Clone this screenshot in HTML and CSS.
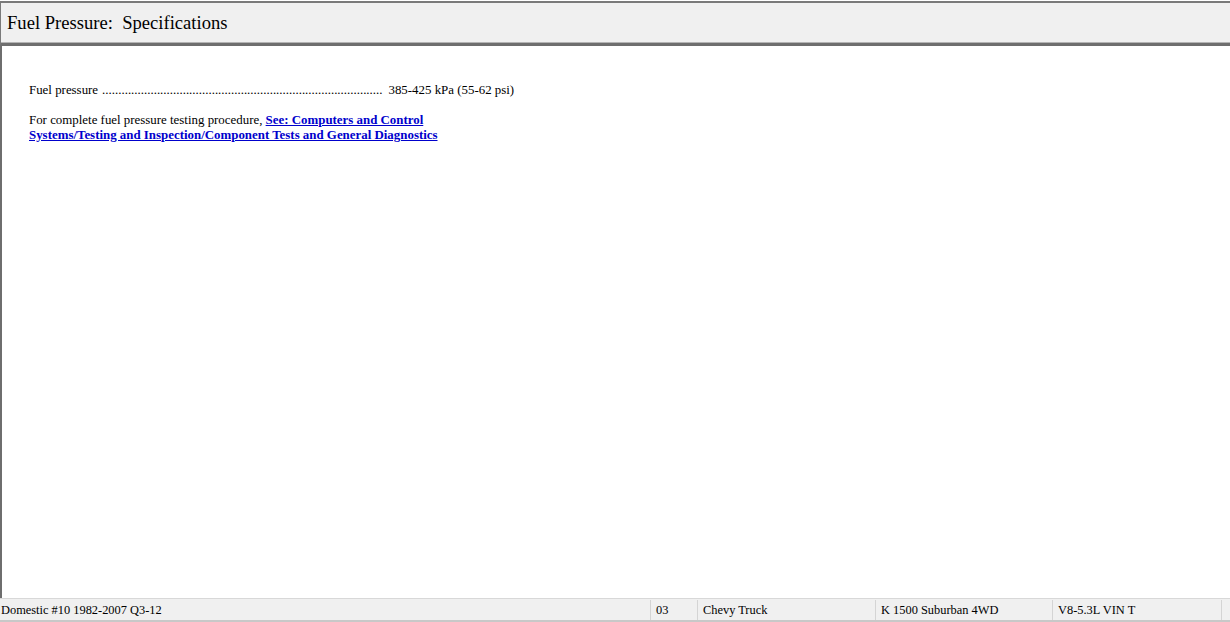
FILE: index.html
```html
<!DOCTYPE html>
<html lang="en">
<head>
  <meta charset="UTF-8" />
  <title>Fuel Pressure: Specifications</title>
  <link rel="stylesheet" href="styles.css">
</head>
<body>
  <div class="window">
    <div class="title-bar">Fuel Pressure:&nbsp; Specifications</div>

    <div class="content">
      <div class="spec-row">
        <span class="spec-name">Fuel pressure</span>
        <span class="leader">.......................................................................................</span>
        <span class="spec-value">385-425 kPa (55-62 psi)</span>
      </div>
      <p class="note">
        For complete fuel pressure testing procedure, <a href="#" class="ref-link">See: Computers and Control<br>Systems/Testing and Inspection/Component Tests and General Diagnostics</a>
      </p>
    </div>

    <div class="status-bar">
      <div class="cell cell-db">Domestic #10 1982-2007 Q3-12</div>
      <div class="cell cell-year">03</div>
      <div class="cell cell-make">Chevy Truck</div>
      <div class="cell cell-model">K 1500 Suburban 4WD</div>
      <div class="cell cell-engine">V8-5.3L VIN T</div>
      <div class="cell cell-end"></div>
    </div>
  </div>
</body>
</html>
```

FILE: styles.css
```css
* {
  box-sizing: border-box;
}

body {
  margin: 0;
  padding: 0;
  background: #ffffff;
  font-family: "Liberation Serif", "Times New Roman", serif;
  color: #000;
}

.window {
  width: 1230px;
  height: 622px;
  display: flex;
  flex-direction: column;
  padding-top: 1px;
}

.title-bar {
  height: 45px;
  background: #f0f0f0;
  border-top: 2px solid #7a7a7a;
  border-left: 1px solid #7a7a7a;
  border-bottom: 3px solid #6e6e6e;
  box-shadow: inset 0 -1px 0 #b4b4b4;
  padding-left: 6px;
  font-size: 18.6px;
  display: flex;
  align-items: center;
}

.content {
  flex: 1;
  border-left: 2px solid #6e6e6e;
  padding: 37px 27px;
  font-size: 12.9px;
}

.spec-row {
  display: flex;
  white-space: nowrap;
  line-height: 15px;
}

.leader {
  margin-left: 4px;
  margin-right: 6px;
}

.note {
  margin: 15px 0 0;
  line-height: 15px;
}

.ref-link {
  color: #0000cc;
  font-weight: bold;
  text-decoration: underline;
}

.status-bar {
  height: 24px;
  background: #f0f0f0;
  border-top: 1px solid #d8d8d8;
  border-bottom: 2px solid #c8c8c8;
  display: flex;
  font-size: 12.4px;
  padding-top: 1px;
}

.cell {
  padding-left: 1px;
  display: flex;
  align-items: center;
  white-space: nowrap;
  border-right: 1px solid #d4d4d4;
}

.cell-db { width: 651px; }
.cell-year { width: 47px; padding-left: 5px; }
.cell-make { width: 178px; padding-left: 5px; }
.cell-model { width: 177px; padding-left: 5px; }
.cell-engine { width: 169px; padding-left: 5px; }
.cell-end { flex: 1; border-right: none; }
```
